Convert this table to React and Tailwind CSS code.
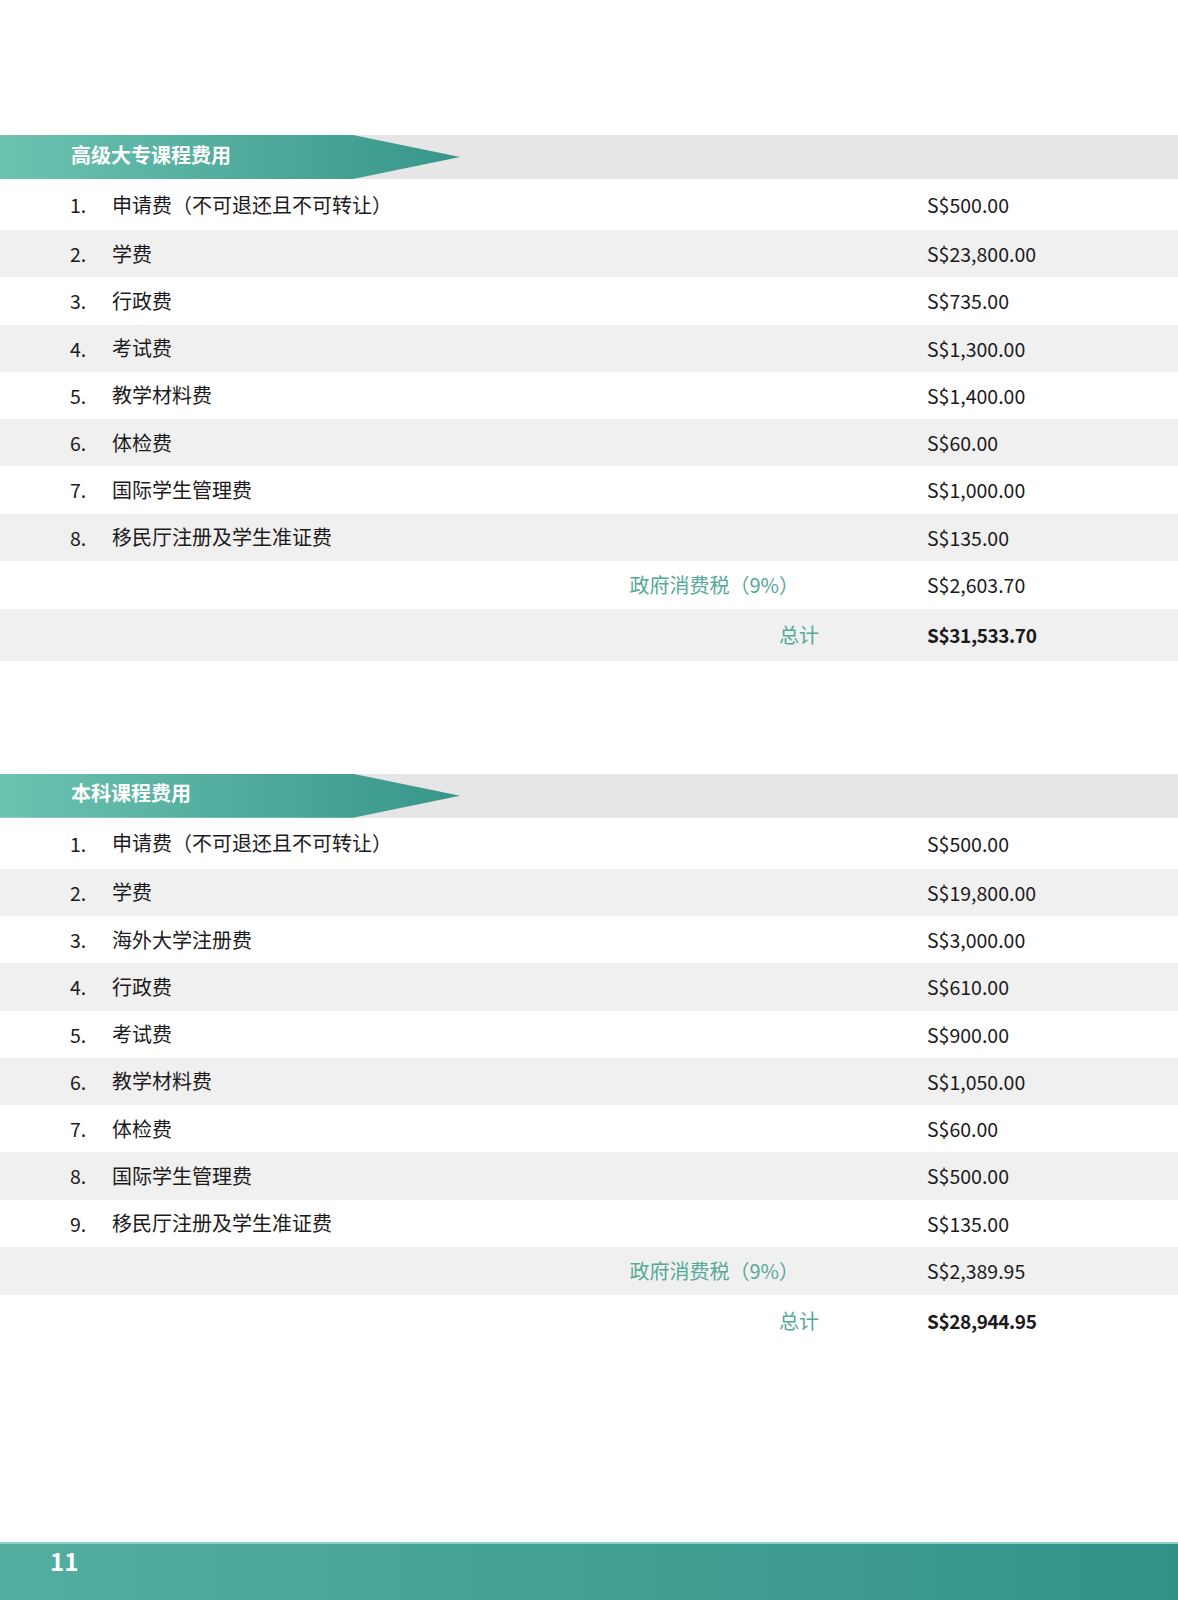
const diplomaFees = [
  ["申请费（不可退还且不可转让）", "S$500.00"],
  ["学费", "S$23,800.00"],
  ["行政费", "S$735.00"],
  ["考试费", "S$1,300.00"],
  ["教学材料费", "S$1,400.00"],
  ["体检费", "S$60.00"],
  ["国际学生管理费", "S$1,000.00"],
  ["移民厅注册及学生准证费", "S$135.00"],
];

const degreeFees = [
  ["申请费（不可退还且不可转让）", "S$500.00"],
  ["学费", "S$19,800.00"],
  ["海外大学注册费", "S$3,000.00"],
  ["行政费", "S$610.00"],
  ["考试费", "S$900.00"],
  ["教学材料费", "S$1,050.00"],
  ["体检费", "S$60.00"],
  ["国际学生管理费", "S$500.00"],
  ["移民厅注册及学生准证费", "S$135.00"],
];

const SectionHeader = ({ title }) => (
  <div className="h-[44px] bg-[#e6e6e6]">
    <div className="h-full w-[460px] bg-gradient-to-r from-[#6cc3b0] to-[#36968b] [clip-path:polygon(0_0,353px_0,100%_50%,353px_100%,0_100%)] flex items-center pl-[71px] pb-[5px]">
      <span className="text-white font-bold text-[20px] leading-none">{title}</span>
    </div>
  </div>
);

const FeeTable = ({ title, items, tax, total }) => {
  const rowBg = (i) => (i % 2 === 0 ? "bg-white" : "bg-[#f0f0f0]");
  return (
    <section>
      <SectionHeader title={title} />
      {items.map(([label, amount], i) => (
        <div
          key={label}
          className={`flex items-center ${i === 0 ? "h-[51px]" : "h-[47.25px]"} ${rowBg(i)}`}
        >
          <div className="w-[927px] flex items-center pl-[70px]">
            <span className="w-[42px] text-[19.5px] text-[#1c1a1b]">{i + 1}.</span>
            <span className="text-[20px] text-[#1c1a1b]">{label}</span>
          </div>
          <span className="text-[19.5px] text-[#1c1a1b]">{amount}</span>
        </div>
      ))}
      <div className={`flex items-center h-[48px] ${rowBg(items.length)}`}>
        <div className="w-[927px] pr-[128px] text-right text-[20px] text-[#55a999]">
          政府消费税（9%）
        </div>
        <span className="text-[19.5px] text-[#1c1a1b]">{tax}</span>
      </div>
      <div className={`flex items-center h-[52px] ${rowBg(items.length + 1)}`}>
        <div className="w-[927px] pr-[108px] text-right text-[20px] text-[#55a999]">
          总计
        </div>
        <span className="text-[19px] font-bold tracking-[-0.4px] text-[#1c1a1b]">{total}</span>
      </div>
    </section>
  );
};

const App = () => {
  return (
    <main className="h-[1600px] bg-white flex flex-col font-['Noto_Sans_CJK_SC','Noto_Sans',sans-serif] [text-spacing-trim:space-all]">
      <div className="pt-[135px]">
        <FeeTable title="高级大专课程费用" items={diplomaFees} tax="S$2,603.70" total="S$31,533.70" />
      </div>
      <div className="pt-[113px]">
        <FeeTable title="本科课程费用" items={degreeFees} tax="S$2,389.95" total="S$28,944.95" />
      </div>
      <footer className="mt-auto h-[58px] border-t-2 border-[#8fd3c6] bg-gradient-to-r from-[#52ae9f] to-[#32928a] pl-[50px]">
        <span className="text-white font-bold text-[24px] leading-[34px]">11</span>
      </footer>
    </main>
  );
};

export default App;
